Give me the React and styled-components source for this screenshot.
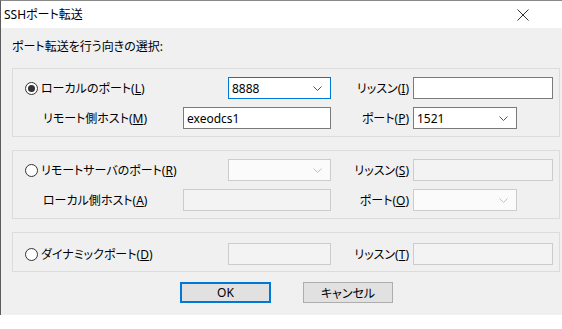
import styled, { createGlobalStyle } from "styled-components";

const Global = createGlobalStyle`
  html, body {
    margin: 0;
    padding: 0;
    background: #ffffff;
  }
  body {
    font-family: "Noto Sans", "Noto Sans CJK JP", sans-serif;
    font-size: 12px;
    color: #000;
    font-feature-settings: "palt";
  }
`;

const Window = styled.div`
  width: 562px;
  height: 315px;
  box-sizing: border-box;
  border-top: 1px solid #8a8a8a;
  border-left: 1px solid #5c5c5c;
  display: flex;
  flex-direction: column;
`;

const TitleBar = styled.div`
  height: 27px;
  flex: none;
  background: #fff;
  display: flex;
  align-items: center;
  justify-content: space-between;
  padding: 0 33px 0 3px;
`;

const Title = styled.div`
  font-size: 12px;
  line-height: 16px;
`;

const Body = styled.div`
  flex: 1;
  background: #f0f0f0;
  padding-left: 11px;
  display: flex;
  flex-direction: column;
`;

const Heading = styled.div`
  margin-top: 11px;
  line-height: 16px;
`;

const Group = styled.div`
  margin-top: ${(p) => p.$mt || 13}px;
  width: 548px;
  box-sizing: border-box;
  border: 1px solid #dcdcdc;
  padding: ${(p) => (p.$single ? "10px 0 6px 11px" : "8px 0 7px 11px")};
  display: flex;
  flex-direction: column;
  gap: 8px;
`;

const Row = styled.div`
  display: flex;
  align-items: center;
  height: 22px;
`;

const RadioLabel = styled.label`
  width: ${(p) => p.$w}px;
  display: flex;
  align-items: center;
  gap: 3px;
  padding-left: 1px;
  box-sizing: border-box;
  white-space: nowrap;
`;

const Circle = styled.span`
  width: 13px;
  height: 13px;
  box-sizing: border-box;
  border: 1px solid #333;
  border-radius: 50%;
  background: #fff;
  display: flex;
  align-items: center;
  justify-content: center;
  &::after {
    content: "";
    width: 7px;
    height: 7px;
    border-radius: 50%;
    background: ${(p) => (p.$checked ? "#333" : "transparent")};
  }
`;

const SubLabel = styled.div`
  width: ${(p) => p.$w}px;
  padding-left: 19px;
  box-sizing: border-box;
  white-space: nowrap;
`;

const SideLabel = styled.div`
  width: 82px;
  padding-right: 4px;
  box-sizing: border-box;
  text-align: right;
  white-space: nowrap;
`;

const Field = styled.div`
  width: ${(p) => p.$w}px;
  height: ${(p) => p.$h || 22}px;
  box-sizing: border-box;
  border: 1px solid
    ${(p) => (p.$focus ? "#0078d7" : p.$disabled ? "#cccccc" : "#7a7a7a")};
  background: ${(p) => (p.$disabled ? "#f3f3f3" : "#fff")};
  display: flex;
  align-items: center;
  padding-left: 3px;
  font-size: 12px;
`;

const ComboBox = styled(Field)`
  background: ${(p) => (p.$disabled ? "#fbfbfb" : "#fff")};
  justify-content: space-between;
  padding-right: 8px;
  svg {
    flex: none;
  }
`;

const U = styled.span`
  text-decoration: underline;
  text-underline-offset: 1px;
`;

const ButtonRow = styled.div`
  margin-top: 10px;
  display: flex;
  gap: 32px;
  padding-left: 168px;
`;

const Button = styled.div`
  width: ${(p) => p.$w}px;
  height: 21px;
  box-sizing: border-box;
  background: #e1e1e1;
  border: ${(p) => (p.$default ? "2px solid #0078d7" : "1px solid #adadad")};
  display: flex;
  align-items: center;
  justify-content: center;
`;

const Chevron = ({ disabled }) => (
  <svg width="9" height="5" viewBox="0 0 9 5">
    <path
      d="M0.5 0.5 L4.5 4.5 L8.5 0.5"
      fill="none"
      stroke={disabled ? "#c2c2c2" : "#555"}
      strokeWidth="1"
    />
  </svg>
);

const Combo = ({ w, value, focus, disabled }) => (
  <ComboBox $w={w} $focus={focus} $disabled={disabled}>
    <span>{value}</span>
    <Chevron disabled={disabled} />
  </ComboBox>
);

const Close = () => (
  <svg width="12" height="12" viewBox="0 0 12 12">
    <path d="M0.5 0.5 L11.5 11.5 M11.5 0.5 L0.5 11.5" stroke="#333" strokeWidth="1" />
  </svg>
);

const Radio = ({ w, checked, text, k }) => (
  <RadioLabel $w={w}>
    <Circle $checked={checked} />
    <span>
      {text}(<U>{k}</U>)
    </span>
  </RadioLabel>
);

export default function App() {
  return (
    <>
      <Global />
      <Window>
        <TitleBar>
          <Title>SSHポート転送</Title>
          <Close />
        </TitleBar>
        <Body>
          <Heading>ポート転送を行う向きの選択:</Heading>

          <Group>
            <Row>
              <Radio w={204} checked text="ローカルのポート" k="L" />
              <Combo w={103} value="8888" focus />
              <SideLabel>
                リッスン(<U>I</U>)
              </SideLabel>
              <Field $w={140} />
            </Row>
            <Row>
              <SubLabel $w={159}>
                リモート側ホスト(<U>M</U>)
              </SubLabel>
              <Field $w={148}>exeodcs1</Field>
              <SideLabel>
                ポート(<U>P</U>)
              </SideLabel>
              <Combo w={104} value="1521" />
            </Row>
          </Group>

          <Group>
            <Row>
              <Radio w={204} text="リモートサーバのポート" k="R" />
              <Combo w={103} disabled />
              <SideLabel>
                リッスン(<U>S</U>)
              </SideLabel>
              <Field $w={140} $disabled />
            </Row>
            <Row>
              <SubLabel $w={159}>
                ローカル側ホスト(<U>A</U>)
              </SubLabel>
              <Field $w={148} $disabled />
              <SideLabel>
                ポート(<U>O</U>)
              </SideLabel>
              <Combo w={104} disabled />
            </Row>
          </Group>

          <Group $single>
            <Row>
              <Radio w={204} text="ダイナミックポート" k="D" />
              <Field $w={103} $disabled />
              <SideLabel>
                リッスン(<U>T</U>)
              </SideLabel>
              <Field $w={140} $disabled />
            </Row>
          </Group>

          <ButtonRow>
            <Button $w={91} $default>
              OK
            </Button>
            <Button $w={90}>キャンセル</Button>
          </ButtonRow>
        </Body>
      </Window>
    </>
  );
}
